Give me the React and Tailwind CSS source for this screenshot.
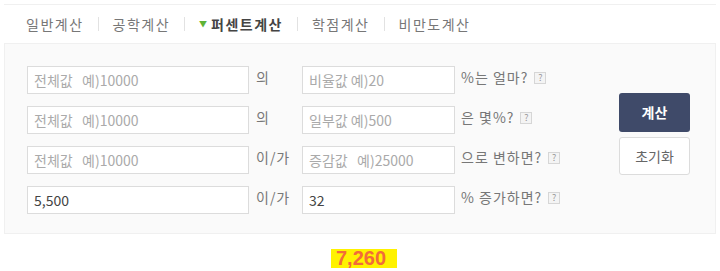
import React from 'react';

const tabs = ['일반계산', '공학계산', '퍼센트계산', '학점계산', '비만도계산'];

const rows = [
  { a: '', ap: '전체값   예)10000', mid: '의', b: '', bp: '비율값 예)20', tail: '%는 얼마?' },
  { a: '', ap: '전체값   예)10000', mid: '의', b: '', bp: '일부값 예)500', tail: '은 몇%?' },
  { a: '', ap: '전체값   예)10000', mid: '이/가', b: '', bp: '증감값   예)25000', tail: '으로 변하면?' },
  { a: '5,500', ap: '', mid: '이/가', b: '32', bp: '', tail: '% 증가하면?' },
];

const Help = () => (
  <span className="ml-[6px] inline-flex h-[12px] w-[12px] items-center justify-center border border-[#d6d6d6] bg-[#f4f4f4] text-[9px] leading-none tracking-normal text-[#999]">
    ?
  </span>
);

export default function App() {
  return (
    <div
      className="h-[271px] w-[720px] overflow-hidden bg-white"
      style={{ fontFamily: '"Noto Sans CJK KR", "Noto Sans", sans-serif' }}
    >
      <div className="mx-[4px] mt-[4px] border-t border-[#f0f0f0]">
        <div className="flex h-[38px] items-center pl-[22px] text-[14px] tracking-[1.5px] text-[#777]">
          {tabs.map((t, i) => (
            <React.Fragment key={t}>
              {i > 0 && <span className="mx-[14px] h-[14px] w-px bg-[#e2e2e2]" />}
              {t === '퍼센트계산' ? (
                <span className="flex items-center font-bold text-[#444]">
                  <span className="mr-[4px] text-[8px] tracking-normal text-[#5fb336]">▼</span>
                  {t}
                </span>
              ) : (
                <span>{t}</span>
              )}
            </React.Fragment>
          ))}
        </div>
        <div className="flex h-[191px] border border-[#f0f0f0] bg-[#fafafa] pl-[22px] pt-[22px]">
          <div className="flex flex-col gap-[12px]">
            {rows.map((r, i) => (
              <div key={i} className="flex h-[28px] items-start">
                <input
                  readOnly
                  value={r.a}
                  placeholder={r.ap}
                  className="h-[28px] w-[222px] border border-[#dcdcdc] bg-white px-[6px] text-[14px] text-[#444] outline-none placeholder:text-[#aaa]"
                />
                <span className="w-[53px] pl-[7px] pt-[1px] text-[14px] tracking-[1px] text-[#777]">{r.mid}</span>
                <input
                  readOnly
                  value={r.b}
                  placeholder={r.bp}
                  className="h-[28px] w-[153px] border border-[#dcdcdc] bg-white px-[6px] text-[14px] text-[#444] outline-none placeholder:text-[#aaa]"
                />
                <span className="flex items-center pl-[6px] pt-[1px] text-[14px] tracking-[1px] text-[#777]">
                  {r.tail}
                  <Help />
                </span>
              </div>
            ))}
          </div>
          <div className="ml-auto mr-[25px] mt-[27px] flex flex-col gap-[5px]">
            <button className="h-[39px] w-[71px] rounded-[3px] bg-[#3f4a69] text-[14px] font-bold text-white">
              계산
            </button>
            <button className="h-[38px] w-[71px] rounded-[3px] border border-[#dcdcdc] bg-white text-[14px] text-[#666]">
              초기화
            </button>
          </div>
        </div>
      </div>
      <div className="flex justify-center pt-[15px]">
        <span
          className="ml-[8px] bg-[#fff200] pl-[5px] pr-[11px] text-[20px] font-bold leading-[19px] text-[#f26b3a]"
          style={{ fontFamily: '"Liberation Sans", Arial, sans-serif' }}
        >
          7,260
        </span>
      </div>
    </div>
  );
}
